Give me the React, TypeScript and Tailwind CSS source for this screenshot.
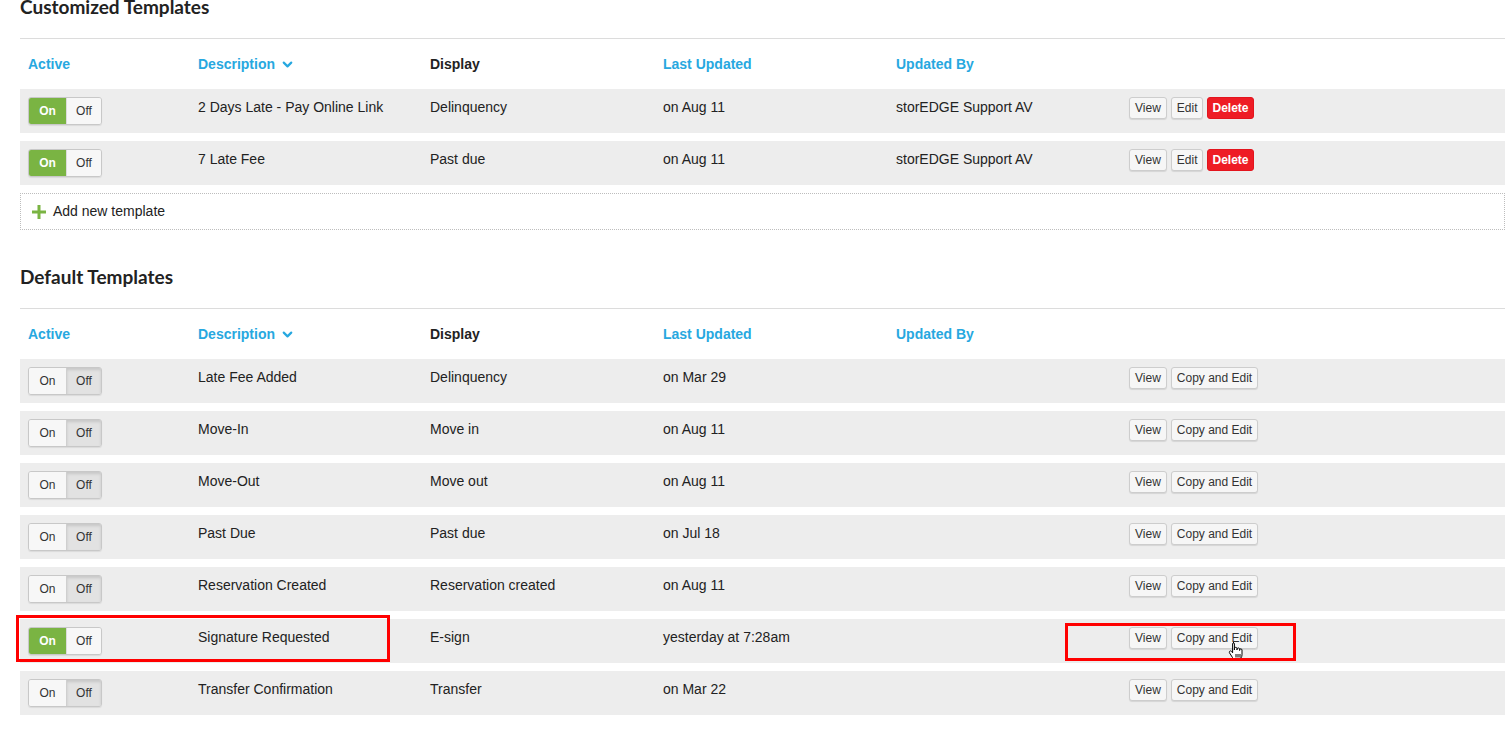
import { ChevronDown } from "lucide-react";

type Row = {
  desc: string;
  display: string;
  updated: string;
  by?: string;
  on: boolean;
};

const custom: Row[] = [
  { desc: "2 Days Late - Pay Online Link", display: "Delinquency", updated: "on Aug 11", by: "storEDGE Support AV", on: true },
  { desc: "7 Late Fee", display: "Past due", updated: "on Aug 11", by: "storEDGE Support AV", on: true },
];

const defaults: Row[] = [
  { desc: "Late Fee Added", display: "Delinquency", updated: "on Mar 29", on: false },
  { desc: "Move-In", display: "Move in", updated: "on Aug 11", on: false },
  { desc: "Move-Out", display: "Move out", updated: "on Aug 11", on: false },
  { desc: "Past Due", display: "Past due", updated: "on Jul 18", on: false },
  { desc: "Reservation Created", display: "Reservation created", updated: "on Aug 11", on: false },
  { desc: "Signature Requested", display: "E-sign", updated: "yesterday at 7:28am", on: true },
  { desc: "Transfer Confirmation", display: "Transfer", updated: "on Mar 22", on: false },
];

const cols = "grid grid-cols-[170px_232px_233px_233px_233px_1fr]";

function Toggle({ on }: { on: boolean }) {
  return (
    <div className="flex h-[28px] w-[74px] overflow-hidden rounded-[3px] border border-[#c8c8c8] text-[12px] leading-[26px] shadow-[0_1px_1px_rgba(0,0,0,0.08)]">
      <div
        className={
          on
            ? "w-[37px] bg-[#7ab443] text-center font-bold text-white"
            : "w-[37px] bg-[#f7f7f7] text-center text-[#333]"
        }
      >
        On
      </div>
      <div
        className={
          on
            ? "flex-1 border-l border-[#dcdcdc] bg-[#f7f7f7] text-center text-[#333]"
            : "flex-1 border-l border-[#cfcfcf] bg-[#e2e2e2] text-center text-[#333] shadow-[inset_0_2px_3px_rgba(0,0,0,0.12)]"
        }
      >
        Off
      </div>
    </div>
  );
}

function Btn({ children, danger }: { children: React.ReactNode; danger?: boolean }) {
  return (
    <button
      type="button"
      className={
        danger
          ? "h-[22px] rounded-[3px] border border-[#e3141d] bg-[#ee1c25] px-[4px] text-[12px] font-bold leading-[20px] text-white"
          : "h-[22px] rounded-[3px] border border-[#cdcdcd] bg-[#f6f6f6] px-[5px] text-[12px] leading-[20px] text-[#333] shadow-[0_1px_1px_rgba(0,0,0,0.1)]"
      }
    >
      {children}
    </button>
  );
}

function Cursor() {
  return (
    <svg className="absolute left-[57px] top-[14px]" width="17" height="20" viewBox="0 0 17 20">
      <path
        d="M5 1.5c.8 0 1.4.6 1.4 1.4V9V7.6c0-.8.6-1.3 1.3-1.3s1.3.5 1.3 1.3V9V8.2c0-.8.6-1.3 1.3-1.3s1.3.5 1.3 1.3V9.5V9c0-.8.6-1.2 1.2-1.2s1.2.5 1.2 1.2v4.8c0 2.4-1.6 4.7-4.3 4.7H8c-1.6 0-2.6-.7-3.5-2L1.6 12c-.5-.7-.3-1.5.3-1.9.6-.4 1.4-.2 1.8.4l.9 1.3V2.9c0-.8.6-1.4 1.4-1.4z"
        fill="#fff"
        stroke="#000"
        strokeWidth="1"
        strokeLinejoin="round"
      />
      <path d="M8 13v3.5M10 13v3.5M12 13v3.5" stroke="#000" strokeWidth="1" />
    </svg>
  );
}

function Section({ title, rows, custom: isCustom }: { title: string; rows: Row[]; custom?: boolean }) {
  return (
    <section>
      <h2 className="border-b border-[#dcdcdc] pb-[21px] font-['Lato',sans-serif] text-[19px] font-bold leading-[20px] text-[#222]">
        {title}
      </h2>

      <div className={`${cols} h-[50px] items-center pl-2 text-[14px] font-bold`}>
        <div className="text-[#27a8e0]">Active</div>
        <div className="flex items-center gap-[5px] text-[#27a8e0]">
          Description
          <ChevronDown size={15} strokeWidth={3.5} />
        </div>
        <div className="text-[#222]">Display</div>
        <div className="text-[#27a8e0]">Last Updated</div>
        <div className="text-[#27a8e0]">Updated By</div>
        <div />
      </div>

      {rows.map((r) => {
        const marked = r.desc === "Signature Requested";
        return (
          <div
            key={r.desc}
            className={`${cols} relative mb-2 h-[44px] items-start bg-[#ededed] pl-2 pt-2 text-[14px] leading-5 text-[#222]`}
          >
            <Toggle on={r.on} />
            <div>{r.desc}</div>
            <div>{r.display}</div>
            <div>{r.updated}</div>
            <div>{r.by ?? ""}</div>
            <div className="relative flex gap-[4px]">
              <Btn>View</Btn>
              {isCustom ? (
                <>
                  <Btn>Edit</Btn>
                  <Btn danger>Delete</Btn>
                </>
              ) : (
                <div className="relative">
                  <Btn>Copy and Edit</Btn>
                  {marked && <Cursor />}
                </div>
              )}
            </div>
            {marked && (
              <>
                <div className="absolute left-[-4px] top-[-4px] h-[47px] w-[374px] border-[3px] border-[#f00]" />
                <div className="absolute left-[1045px] top-[4px] h-[38px] w-[231px] border-[3px] border-[#f00]" />
              </>
            )}
          </div>
        );
      })}

      {isCustom && (
        <div className="flex h-[37px] items-center gap-[7px] border border-dotted border-[#bdbdbd] pl-[11px] text-[14px] text-[#222]">
          <svg width="14" height="14" viewBox="0 0 14 14">
            <rect x="5.5" y="0" width="3" height="14" fill="#7ab443" />
            <rect x="0" y="5.5" width="14" height="3" fill="#7ab443" />
          </svg>
          Add new template
        </div>
      )}
    </section>
  );
}

export default function App() {
  return (
    <div className="h-[737px] overflow-hidden bg-white font-['Liberation_Sans',Arial,sans-serif]">
      <div className="-mt-[3px] ml-[20px] w-[1485px]">
        <Section title="Customized Templates" rows={custom} custom />
        <div className="h-[37px]" />
        <Section title="Default Templates" rows={defaults} />
      </div>
    </div>
  );
}
